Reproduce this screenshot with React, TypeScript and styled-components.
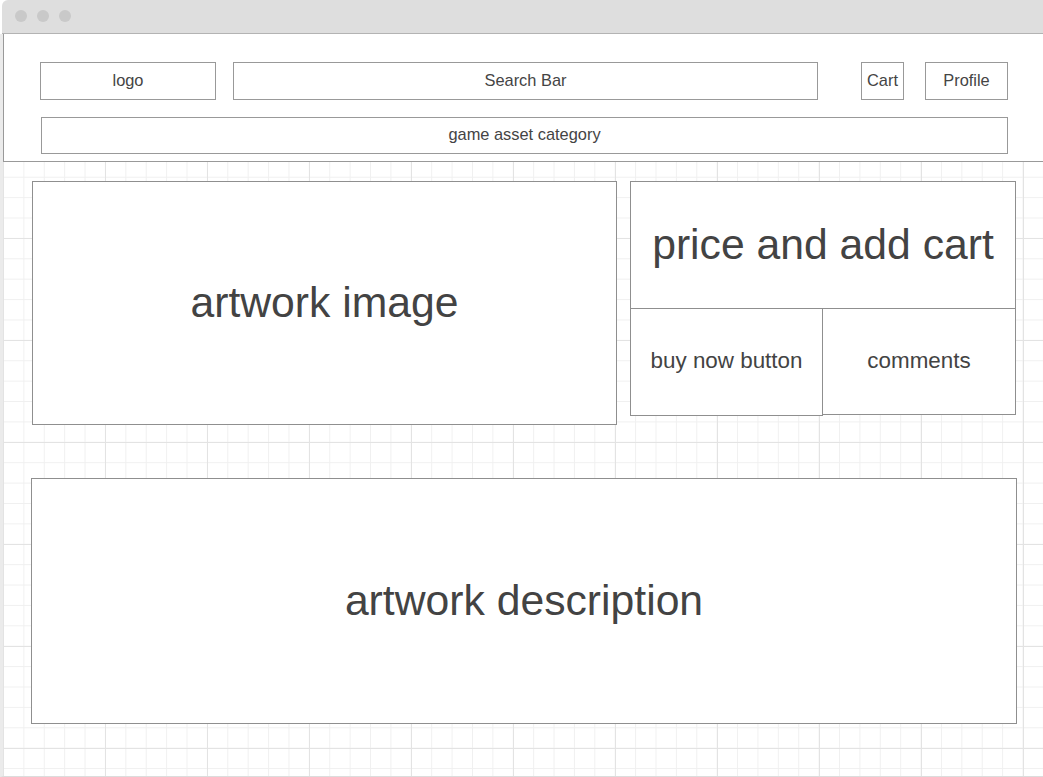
import React from "react";
import styled, { createGlobalStyle } from "styled-components";

const GlobalStyle = createGlobalStyle`
  html, body {
    margin: 0;
    padding: 0;
    background: #ffffff;
  }
  body {
    font-family: "Liberation Sans", Arial, Helvetica, sans-serif;
    color: #444444;
  }
  * { box-sizing: border-box; }
`;

const Frame = styled.div`
  width: 1043px;
  height: 777px;
  display: flex;
  flex-direction: column;
  overflow: hidden;
  background: #ffffff;
`;

const TitleBar = styled.div`
  height: 34px;
  flex: none;
  margin-left: 2px;
  background: #dedede;
  border-bottom: 1px solid #b3b3b3;
  border-top-left-radius: 6px;
  display: flex;
  align-items: center;
  gap: 10px;
  padding: 0 0 1px 13px;
`;

const Dot = styled.span`
  width: 12px;
  height: 12px;
  border-radius: 50%;
  background: #c9c9c9;
`;

const Body = styled.div`
  flex: 1;
  display: flex;
  flex-direction: column;
  border-left: 3px solid #ebebeb;
  border-bottom: 1px solid #dcdcdc;
  background-color: #ffffff;
  background-image:
    linear-gradient(to right, #e3e3e3 1px, transparent 1px),
    linear-gradient(to bottom, #e3e3e3 1px, transparent 1px),
    linear-gradient(to right, #f0f0f0 1px, transparent 1px),
    linear-gradient(to bottom, #f0f0f0 1px, transparent 1px);
  background-size: 102px 102px, 102px 102px, 20.4px 20.4px, 20.4px 20.4px;
`;

const Header = styled.header`
  height: 128px;
  flex: none;
  background: #ffffff;
  border-left: 1px solid #999999;
  border-bottom: 1px solid #999999;
  padding: 28px 0 0 36px;
  display: flex;
  flex-direction: column;
`;

const TopRow = styled.div`
  display: flex;
  align-items: flex-start;
`;

const HeaderBox = styled.div`
  height: 38px;
  border: 1px solid #999999;
  background: #ffffff;
  display: flex;
  align-items: center;
  justify-content: center;
  padding-bottom: 2px;
  font-size: 16.4px;
  color: #444444;
  white-space: nowrap;
`;

const Logo = styled(HeaderBox)`
  width: 176px;
`;

const SearchBar = styled(HeaderBox)`
  width: 585px;
  margin-left: 17px;
`;

const CartButton = styled(HeaderBox)`
  width: 43px;
  margin-left: 43px;
`;

const ProfileButton = styled(HeaderBox)`
  width: 83px;
  margin-left: 21px;
`;

const CategoryBar = styled(HeaderBox)`
  width: 967px;
  height: 37px;
  margin: 17px 0 0 1px;
`;

const Main = styled.main`
  flex: 1;
  display: flex;
  flex-direction: column;
  padding-top: 19px;
`;

const ContentRow = styled.div`
  display: flex;
  align-items: flex-start;
`;

const Panel = styled.div<{ $size: "large" | "medium" }>`
  border: 1px solid #8f8f8f;
  background: #ffffff;
  display: flex;
  align-items: center;
  justify-content: center;
  padding-bottom: 2px;
  color: #434343;
  white-space: nowrap;
  font-size: ${(p) => (p.$size === "large" ? "42.7px" : "22.4px")};
`;

const ArtworkImage = styled(Panel)`
  width: 585px;
  height: 244px;
  margin-left: 29px;
`;

const SideColumn = styled.div`
  width: 386px;
  margin-left: 13px;
  display: flex;
  flex-direction: column;
`;

const PriceBox = styled(Panel)`
  width: 386px;
  height: 128px;
`;

const ActionRow = styled.div`
  display: flex;
  margin-top: -1px;
`;

const BuyNow = styled(Panel)`
  width: 193px;
  height: 108px;
`;

const Comments = styled(Panel)`
  width: 194px;
  height: 107px;
  margin-left: -1px;
`;

const Description = styled(Panel)`
  width: 986px;
  height: 246px;
  margin: 53px 0 0 28px;
`;

export default function App() {
  return (
    <>
      <GlobalStyle />
      <Frame>
        <TitleBar>
          <Dot />
          <Dot />
          <Dot />
        </TitleBar>
        <Body>
          <Header>
            <TopRow>
              <Logo>logo</Logo>
              <SearchBar>Search Bar</SearchBar>
              <CartButton>Cart</CartButton>
              <ProfileButton>Profile</ProfileButton>
            </TopRow>
            <CategoryBar>game asset category</CategoryBar>
          </Header>
          <Main>
            <ContentRow>
              <ArtworkImage $size="large">artwork image</ArtworkImage>
              <SideColumn>
                <PriceBox $size="large">price and add cart</PriceBox>
                <ActionRow>
                  <BuyNow $size="medium">buy now button</BuyNow>
                  <Comments $size="medium">comments</Comments>
                </ActionRow>
              </SideColumn>
            </ContentRow>
            <Description $size="large">artwork description</Description>
          </Main>
        </Body>
      </Frame>
    </>
  );
}
